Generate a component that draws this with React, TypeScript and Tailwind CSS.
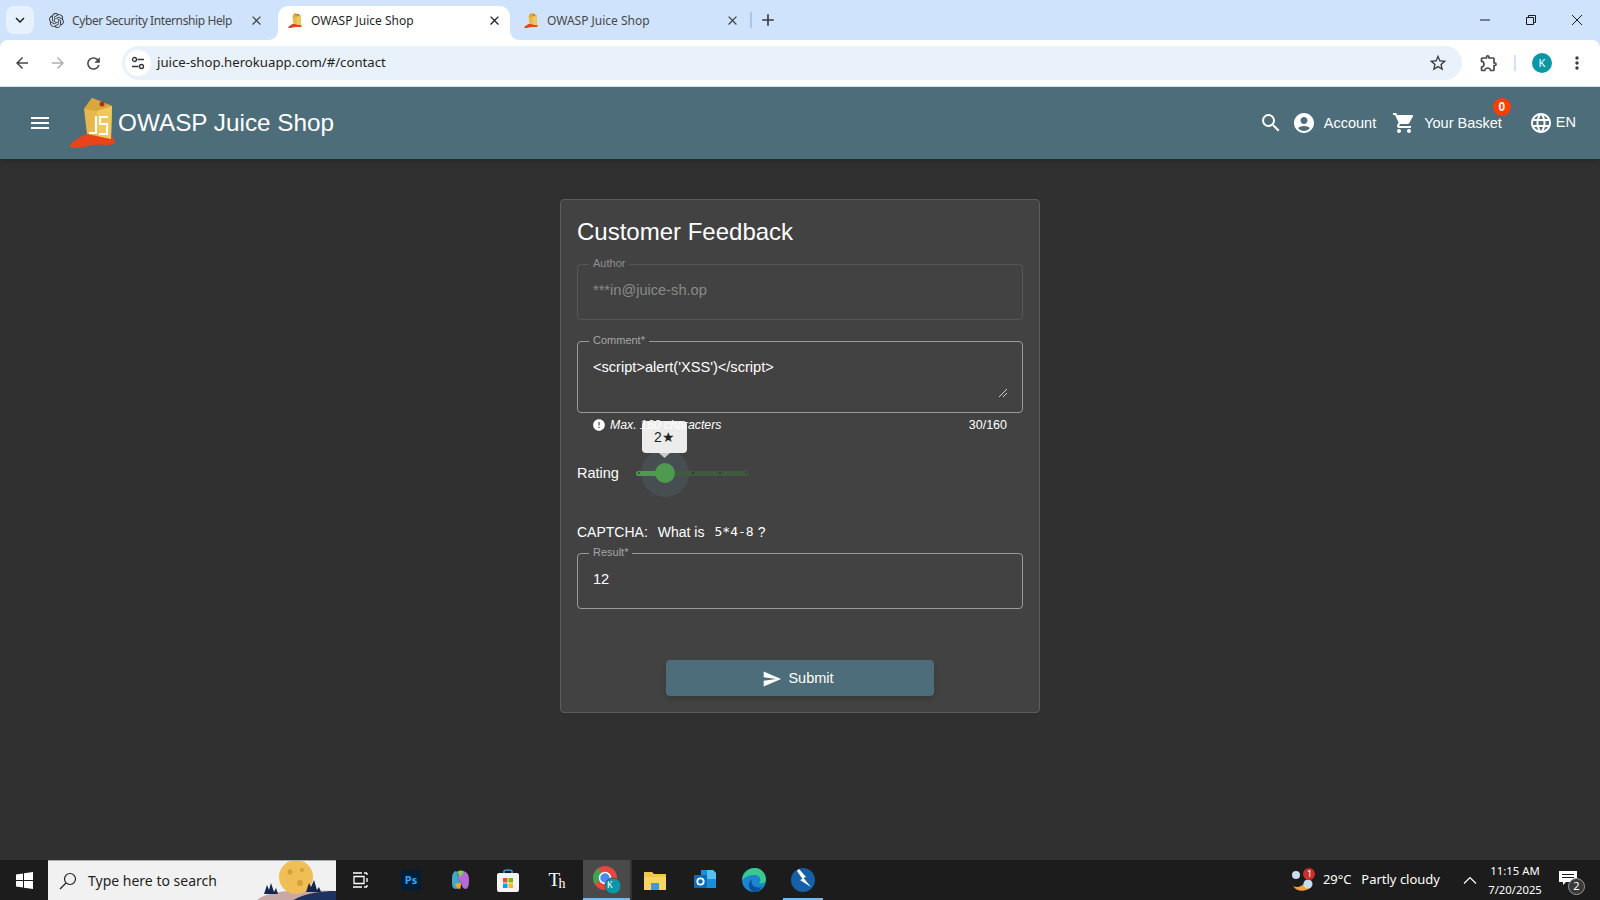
import React from "react";
import { MdMenu, MdSearch, MdAccountCircle, MdShoppingCart, MdLanguage, MdSend, MdError, MdClose, MdAdd, MdKeyboardArrowDown, MdArrowBack, MdArrowForward, MdRefresh, MdStarBorder, MdMoreVert, MdOutlineExtension } from "react-icons/md";
import { SiOpenai } from "react-icons/si";

const Logo = ({ s = 1 }: { s?: number }) => (
  <svg width={46 * s} height={52 * s} viewBox="0 0 46 52">
    <path d="M1 47 C5 42 11 39 17 36 L42 38 C46 41 47 45 44 46 C38 48 32 46 24 47 C16 48 9 52 1 49Z" fill="#e8431a" />
    <path d="M15 11 L23 0 L43 8 L42 41 L18 36Z" fill="#e7b94c" />
    <path d="M15 11 L23 0 L43 8 L28 13Z" fill="#d9a63c" />
    <path d="M28 13 L43 8 L42 41 L29 38Z" fill="#f0c75a" />
    <circle cx="33" cy="6" r="2.500" fill="#b5301a" />
    {s >= 1 && <path d="M27 18v17h-7M39 19h-8v7h7v10h-8" fill="none" stroke="#fff" strokeWidth="2.200" />}
  </svg>
);

const Tab = ({ w, active, icon, title, tight }: { w: string; active?: boolean; icon: React.ReactNode; title: string; tight?: boolean }) => (
  <div className={`relative flex items-center h-[34px] mt-[6px] pb-[5px] ${tight ? "pl-[12px]" : "pl-[9px]"} ${w} ${active ? "bg-white rounded-t-[10px] text-[#1f1f1f]" : "text-[#474747]"}`}>
    {active && (
      <>
        <svg className="absolute bottom-0 left-[-10px]" width="10" height="10" viewBox="0 0 10 10"><path d="M10 0V10H0C6 10 10 6 10 0Z" fill="#fff" /></svg>
        <svg className="absolute bottom-0 right-[-10px]" width="10" height="10" viewBox="0 0 10 10"><path d="M0 0V10H10C4 10 0 6 0 0Z" fill="#fff" /></svg>
      </>
    )}
    <span className="w-[16px] h-[16px] flex items-center justify-center shrink-0">{icon}</span>
    <span className={`ml-[8px] text-[12px] whitespace-nowrap flex-1 font-['Noto_Sans',sans-serif] ${tight ? "tracking-[-0.4px]" : ""}`}>{title}</span>
    <MdClose className={`mr-[8px] ${active ? "text-[#1f1f1f]" : "text-[#474747]"}`} size={15} />
  </div>
);

const Field = ({ label, h, disabled, children }: { label: string; h: string; disabled?: boolean; children: React.ReactNode }) => (
  <fieldset className={`relative block ${h} min-w-0 rounded-[4px] border ${disabled ? "border-[#565656]" : "border-[#9a9a9a]"}`}>
    <legend className={`ml-[11px] px-[4px] text-[11px] leading-[10px] pb-[2px] ${disabled ? "text-[#8f8f8f]" : "text-[#a6a6a6]"}`}>{label}</legend>
    <div className={`px-[15px] pt-[12px] text-[14.600px] leading-[16px] ${disabled ? "text-[#8a8a8a]" : "text-white"}`}>{children}</div>
  </fieldset>
);

const Tray = ({ c, children, active, line }: { c: string; children: React.ReactNode; active?: boolean; line?: boolean }) => (
  <div className={`relative flex items-center justify-center h-[40px] shrink-0 ${c} ${active ? "bg-[#4a4a4a]" : ""}`}>
    {children}
    {line && <span className="absolute bottom-0 left-0 right-0 h-[2px] bg-[#76b9ed]" />}
  </div>
);

export default function App() {
  return (
    <div className="w-[1600px] h-[900px] flex flex-col overflow-hidden bg-[#303030] font-['Liberation_Sans',Arial,sans-serif]">
      {/* tab strip */}
      <div className="h-[40px] shrink-0 bg-[#cfe3fc] flex items-start">
        <div className="w-[28px] h-[28px] ml-[6px] mt-[6px] rounded-[8px] bg-[#e7f0fd] flex items-center justify-center text-[#1f1f1f]">
          <MdKeyboardArrowDown size={18} />
        </div>
        <div className="flex ml-[2px]">
          <Tab w="w-[236px]" tight icon={<SiOpenai size={15} className="text-[#3c3c3c]" />} title="Cyber Security Internship Help" />
          <Tab w="w-[232px] ml-[6px]" active icon={<Logo s={0.3} />} title="OWASP Juice Shop" />
          <Tab w="w-[234px] ml-[4px]" icon={<Logo s={0.3} />} title="OWASP Juice Shop" />
        </div>
        <span className="w-[2px] h-[16px] bg-[#a6c8f0] mt-[12px] ml-[2px]" />
        <MdAdd size={20} className="ml-[6px] mt-[10px] text-[#3c3c3c]" />
        <div className="ml-auto flex items-center h-[40px] text-[#1a1a1a]">
          <svg width="46" height="40" viewBox="0 0 46 40"><path d="M18 20H28" stroke="currentColor" strokeWidth="1" /></svg>
          <svg width="46" height="40" viewBox="0 0 46 40"><path d="M18.500 17.500h7v7h-7zM20.500 17.500v-2h7v7h-2" fill="none" stroke="currentColor" strokeWidth="1" /></svg>
          <svg width="46" height="40" viewBox="0 0 46 40"><path d="M18 15L28 25M28 15L18 25" stroke="currentColor" strokeWidth="1" /></svg>
        </div>
      </div>
      {/* toolbar */}
      <div className="h-[47px] shrink-0 bg-[#cfe3fc]">
        <div className="h-[46px] bg-white rounded-t-[8px] flex items-center text-[#474747]">
          <MdArrowBack size={18} className="ml-[13px]" />
          <MdArrowForward size={18} className="ml-[18px] text-[#b0b0b0]" />
          <MdRefresh size={19} className="ml-[17px]" />
          <div className="ml-[19px] w-[1340px] h-[34px] rounded-full bg-[#e9f1fa] flex items-center">
            <span className="ml-[3px] w-[26px] h-[26px] rounded-full bg-white flex items-center justify-center">
              <svg width="14" height="14" viewBox="0 0 14 14" fill="none" stroke="#333" strokeWidth="1.300"><circle cx="3.500" cy="3.500" r="2" /><path d="M6.500 3.500H13M1 10.500H7.500" /><circle cx="10.500" cy="10.500" r="2" /></svg>
            </span>
            <span className="ml-[6px] text-[13.200px] text-[#1f1f1f] font-['Noto_Sans',sans-serif]">juice-shop.herokuapp.com/#/contact</span>
            <MdStarBorder size={20} className="ml-auto mr-[14px] text-[#3c3c3c]" />
          </div>
          <MdOutlineExtension size={20} className="ml-[17px] text-[#474747]" />
          <span className="ml-[15px] w-[2px] h-[16px] bg-[#cfe3fc]" />
          <span className="ml-[16px] w-[20px] h-[20px] rounded-full bg-[#0a97a6] text-white text-[11px] flex items-center justify-center font-['Noto_Sans',sans-serif]">K</span>
          <MdMoreVert size={20} className="ml-[15px] text-[#3c3c3c]" />
        </div>
      </div>
      {/* app header */}
      <header className="h-[72px] shrink-0 bg-[#4c6d79] flex items-center text-white shadow-md relative">
        <MdMenu size={24} className="ml-[28px]" />
        <span className="ml-[17px] mt-[2px]"><Logo /></span>
        <span className="ml-[3px] text-[24.300px] leading-none whitespace-nowrap">OWASP Juice Shop</span>
        <MdSearch size={24} className="ml-auto" />
        <MdAccountCircle size={24} className="ml-[9px]" />
        <span className="ml-[8px] mt-[1px] text-[14.500px]">Account</span>
        <MdShoppingCart size={24} className="ml-[16px]" />
        <span className="relative ml-[8px] mt-[1px] text-[14.500px]">
          Your Basket
          <span className="absolute right-[-9px] top-[-15px] w-[18px] h-[18px] rounded-full bg-[#ff3d00] text-white text-[12px] font-bold flex items-center justify-center">0</span>
        </span>
        <MdLanguage size={24} className="ml-[27px]" />
        <span className="ml-[3px] mr-[24px] text-[14.500px]">EN</span>
      </header>
      {/* main */}
      <main className="flex-1 min-h-0 flex justify-center items-start">
        <div className="relative w-[480px] mt-[40px] rounded-[4px] border border-[#5c5c5c] bg-[#424242] px-[16px] pb-[16px] text-white">
          <h1 className="mt-[16px] text-[24px] leading-[32px]">Customer Feedback</h1>
          <div className="mt-[10px]">
            <Field label="Author" h="h-[62px]" disabled>***in@juice-sh.op</Field>
          </div>
          <div className="mt-[15px]">
            <Field label="Comment*" h="h-[78px]">
              {"<script>alert('XSS')</script>"}
              <svg className="absolute right-[15px] bottom-[15px]" width="8" height="8" viewBox="0 0 8 8"><path d="M0 8L8 0M4 8L8 4" stroke="#cfcfcf" strokeWidth="1" /></svg>
            </Field>
          </div>
          <div className="relative z-10 mt-[5px] h-[14px] flex items-center px-[16px] text-[12.300px]">
            <MdError size={14} className="-ml-[1px]" />
            <span className="ml-[4px] italic">Max. 160 characters</span>
            <span className="ml-auto text-[12.500px]">30/160</span>
          </div>
          <div className="mt-[29px] h-[24px] flex items-center">
            <span className="text-[14.500px] pt-[1px]">Rating</span>
            <div className="relative ml-[17px] w-[112px] h-[5px]">
              <span className="absolute left-[5px] top-[-22px] w-[48px] h-[48px] rounded-full bg-[#4c5960]/50" />
              <span className="absolute left-0 top-0 w-[112px] h-[5px] rounded-full bg-[#3f5a3f]" />
              <span className="absolute left-0 top-0 h-[5px] w-[29px] rounded-l-full bg-[#4f9a4f]" />
              <span className="absolute left-[2px] top-[1.500px] w-[2px] h-[2px] bg-[#2f5f2f]" />
              <span className="absolute left-[56px] top-[1.500px] w-[2px] h-[2px] bg-[#2f3f2f]" />
              <span className="absolute left-[83px] top-[1.500px] w-[2px] h-[2px] bg-[#2f3f2f]" />
              <span className="absolute left-[109px] top-[1.500px] w-[2px] h-[2px] bg-[#2f3f2f]" />
              <span className="absolute left-[19px] top-[-8px] w-[20px] h-[20px] rounded-full bg-[#4f9a4f]" />
            </div>
          </div>
          <div className="absolute left-[81px] top-[221px] w-[45px] h-[32px] rounded-[4px] bg-[#ececec] text-[#222] text-[14px] flex items-center justify-center">
            2★
            <svg className="absolute left-[17px] top-[32px]" width="11" height="5" viewBox="0 0 11 5"><path d="M0 0H11L5.500 5Z" fill="#c9cccd" /></svg>
          </div>
          <div className="mt-[38px] h-[18px] flex items-center text-[14px] whitespace-pre">
            <span>CAPTCHA:</span>
            <span className="ml-[10px]">What is</span>
            <span className="ml-[10px] font-['DejaVu_Sans_Mono',monospace] text-[13px]">5*4-8</span>
            <span className="ml-[4px]">?</span>
          </div>
          <div className="mt-[6px]">
            <Field label="Result*" h="h-[62px]">12</Field>
          </div>
          <div className="mt-[51px] flex justify-center">
            <button className="w-[268px] h-[36px] rounded-[4px] bg-[#4c6d79] shadow-md flex items-center justify-center text-[14.500px] font-medium text-white pt-[1px] pr-[4px]">
              <MdSend size={20} className="mr-[6px]" />
              Submit
            </button>
          </div>
        </div>
      </main>
      {/* taskbar */}
      <footer className="h-[40px] shrink-0 bg-[#1c1c1c] flex items-center text-white font-['Noto_Sans',sans-serif]">
        <Tray c="w-[48px]">
          <svg width="17" height="17" viewBox="0 0 17 17" fill="#fff"><path d="M0 2.400 7 1.400V8H0zM8 1.200 17 0V8H8zM0 9H7V15.600L0 14.600zM8 9H17V17L8 15.800z" /></svg>
        </Tray>
        <div className="w-[288px] h-[40px] shrink-0 bg-[#f1f1f1] flex items-center relative overflow-hidden text-[#1f1f1f] border-t border-[#aaa]">
          <svg className="ml-[11px]" width="18" height="18" viewBox="0 0 18 18" fill="none" stroke="#222" strokeWidth="1.200"><circle cx="11" cy="7" r="5.500" /><path d="M7 11L1 17" /></svg>
          <span className="ml-[11px] text-[14px]">Type here to search</span>
          <svg className="absolute right-0 top-0" width="84" height="40" viewBox="0 0 84 40">
            <path d="M4 40C14 30 40 28 84 30V40Z" fill="#c9a9a6" />
            <path d="M40 40C52 32 70 30 84 30V40Z" fill="#1c3260" />
            <circle cx="44" cy="16" r="17" fill="#efbe55" />
            <circle cx="38" cy="11" r="2.500" fill="#d49f3c" /><circle cx="50" cy="9" r="2" fill="#d49f3c" /><circle cx="48" cy="22" r="3" fill="#d49f3c" />
            <path d="M12 33l3-9 2 5 2-7 3 9 2-4 2 6zM54 31l3-9 2 4 3-7 3 10 2-3 2 5z" fill="#142550" />
          </svg>
        </div>
        <Tray c="w-[48px]">
          <svg width="17" height="16" viewBox="0 0 17 16" fill="none" stroke="#fff" strokeWidth="1.300"><path d="M2 4.500h10v7H2zM1 1h9M12 1h3M15 1v2M1 15h9M12 15h3M15 15v-2M15 6v4" /></svg>
        </Tray>
        <Tray c="w-[54px]">
          <span className="w-[20px] h-[20px] rounded-[3px] bg-[#001e36] text-[#31a8ff] text-[11px] font-bold flex items-center justify-center">Ps</span>
        </Tray>
        <Tray c="w-[44px]">
          <svg width="22" height="22" viewBox="0 0 22 22"><path d="M7 2C3 3 3 8 3 12S3 20 7 20C10 20 11 17 12 14L9 10C9 7 9 3 7 2Z" fill="#3ea9c8" /><path d="M13 2C10 2 9 6 9 10L12 14C13 17 14 20 17 20C20 19 20 14 20 10S18 2 13 2Z" fill="#b46bd8" /><path d="M6 15C7 18 9 20 11 20C12 18 12 16 12 14C10 14 8 14 6 15Z" fill="#f2a23c" /><path d="M8 3C10 1 14 1 15 3L11 8Z" fill="#7fd05a" /></svg>
        </Tray>
        <Tray c="w-[52px]">
          <svg width="22" height="24" viewBox="0 0 22 24"><path d="M7 6V3C7 1.500 15 1.500 15 3V6" fill="none" stroke="#3ea0d8" strokeWidth="1.500" /><rect x="0" y="5" width="22" height="19" rx="2" fill="#f4f4f4" /><rect x="6" y="10" width="4.500" height="4.500" fill="#f25022" /><rect x="11.500" y="10" width="4.500" height="4.500" fill="#7fba00" /><rect x="6" y="15.500" width="4.500" height="4.500" fill="#00a4ef" /><rect x="11.500" y="15.500" width="4.500" height="4.500" fill="#ffb900" /></svg>
        </Tray>
        <Tray c="w-[49px]">
          <span className="relative w-[20px] h-[24px] text-[19px] leading-[24px] font-['Liberation_Serif',serif] font-normal">T<span className="absolute left-[10px] top-[4px] text-[14px]">h</span></span>
        </Tray>
        <Tray c="w-[47px]" active line>
          <svg width="30" height="30" viewBox="0 0 30 30"><circle cx="13" cy="13" r="12" fill="#e8453c" /><path d="M13 13L2.600 19A12 12 0 0 1 6 3.300Z" fill="#34a853" /><path d="M13 25A12 12 0 0 0 25 13H13Z" fill="#fbbc04" /><circle cx="13" cy="13" r="5.500" fill="#4a8af4" stroke="#fff" strokeWidth="1.500" /><circle cx="21" cy="21" r="8" fill="#0a97a6" stroke="#4a4a4a" /></svg>
          <span className="absolute left-[24px] top-[18px] text-[9px]">K</span>
        </Tray>
        <span className="w-[2px] h-[40px] bg-[#333] shrink-0" />
        <Tray c="w-[46px]">
          <svg width="22" height="20" viewBox="0 0 22 20"><path d="M0 2h8l2 2h12v16H0z" fill="#f3c64a" /><path d="M0 7h22v13H0z" fill="#f6d565" /><rect x="7" y="13" width="8" height="7" fill="#3d9ae0" /></svg>
        </Tray>
        <Tray c="w-[54px]">
          <svg width="24" height="24" viewBox="0 0 24 24"><path d="M8 2h12l3 3v15H8z" fill="#1a8fd8" /><path d="M14 2h6l3 3v6h-9z" fill="#56c1f0" /><rect x="1" y="7" width="13" height="13" rx="1" fill="#0a6cbd" /><circle cx="7.500" cy="13.500" r="3.200" fill="none" stroke="#fff" strokeWidth="1.800" /></svg>
        </Tray>
        <Tray c="w-[44px]">
          <svg width="24" height="24" viewBox="0 0 24 24"><circle cx="12" cy="12" r="12" fill="#1b86d0" /><path d="M0 12C1 3 8 0 13 0C19 0 24 5 24 12C24 15 20 16 17 15C20 12 18 7 13 7C7 7 3 9 0 12Z" fill="#39c98c" /><path d="M12 24C6 22 5 15 10 11C8 17 13 21 20 19C18 22 15 24 12 24Z" fill="#0c4f9e" /></svg>
        </Tray>
        <div className="ml-[7px]">
          <Tray c="w-[40px]" line>
            <svg width="24" height="24" viewBox="0 0 24 24"><circle cx="12" cy="12" r="12" fill="#1560a8" /><path d="M8 1L15 9L12.500 10L20 19L9 12L11.500 11L6 3Z" fill="#fff" /></svg>
          </Tray>
        </div>
        <div className="ml-auto flex items-center h-[40px]">
          <span className="relative w-[24px] h-[24px]">
            <svg width="24" height="24" viewBox="0 0 24 24"><circle cx="5" cy="7" r="4" fill="#c9dcf0" /><path d="M2 18C6 20 11 19 14 14L19 20C14 24 6 24 2 18Z" fill="#f2a23c" /><circle cx="17" cy="16" r="4.500" fill="#c9dcf0" /><circle cx="18" cy="6" r="6" fill="#c9302c" /></svg>
            <span className="absolute left-[16px] top-[1px] text-[9px] leading-[10px]">1</span>
          </span>
          <span className="ml-[8px] text-[13px] tracking-[-0.1px]">29°C</span>
          <span className="ml-[10px] text-[13px]">Partly cloudy</span>
          <svg className="ml-[23px]" width="14" height="8" viewBox="0 0 14 8" fill="none" stroke="#fff" strokeWidth="1.200"><path d="M1 7.500L7 1.500L13 7.500" /></svg>
          <div className="ml-[7px] w-[62px] flex flex-col items-center text-[11.300px] leading-[19px] whitespace-nowrap">
            <span>11:15 AM</span>
            <span>7/20/2025</span>
          </div>
          <span className="relative ml-[13px] mr-[17px] w-[24px] h-[24px]">
            <svg width="18" height="17" viewBox="0 0 18 17" fill="#fff" className="mt-[2px]"><path fillRule="evenodd" d="M0 1h18v11H7l-3 3v-3H0zM3 4v1h12V4zM3 7v1h12V7z" /></svg>
            <span className="absolute right-[-2px] bottom-[-3px] w-[17px] h-[17px] rounded-full bg-[#3a3a3a] border border-[#999] text-[11px] flex items-center justify-center">2</span>
          </span>
        </div>
      </footer>
    </div>
  );
}
